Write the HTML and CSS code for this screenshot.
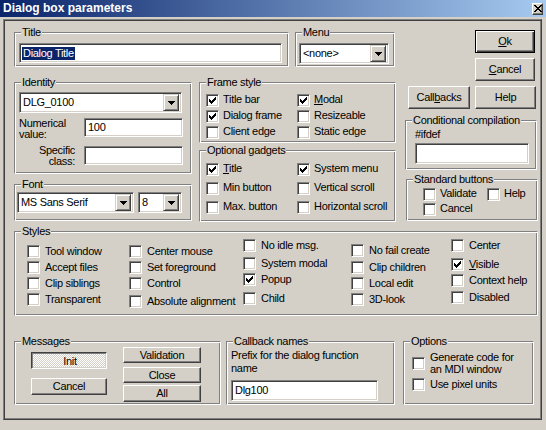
FILE: index.html
```html
<!DOCTYPE html>
<html>
<head>
<meta charset="utf-8">
<title>Dialog box parameters</title>
<link rel="stylesheet" href="styles.css">
</head>
<body>
<div class="window">
  <div class="titlebar">
    <span class="title-text">Dialog box parameters</span>
    <span class="close-btn"><svg width="8" height="7" viewBox="0 0 8 7"><path d="M0 0h2v1h-2zM6 0h2v1h-2zM1 1h2v1h-2zM5 1h2v1h-2zM2 2h4v1h-4zM3 3h2v1h-2zM2 4h4v1h-4zM1 5h2v1h-2zM5 5h2v1h-2zM0 6h2v1h-2zM6 6h2v1h-2z" fill="#000"/></svg></span>
  </div>
  <div class="client">
    <div class="top">
      <div class="left">
        <div class="row1">
          <div class="group g-title">
            <span class="legend">Title</span>
            <div class="edit title-edit"><span class="sel">Dialog Title</span></div>
          </div>
          <div class="group g-menu">
            <span class="legend">Menu</span>
            <div class="combo menu-combo"><span class="val">&lt;none&gt;</span><span class="drop"><svg width="7" height="4" viewBox="0 0 7 4"><path d="M0 0H7V1H6V2H5V3H4V4H3V3H2V2H1V1H0Z" fill="#000"/></svg></span></div>
          </div>
        </div>
        <div class="row2">
          <div class="colA">
            <div class="group g-identity">
              <span class="legend">Identity</span>
              <div class="combo id-combo"><span class="val">DLG_0100</span><span class="drop"><svg width="7" height="4" viewBox="0 0 7 4"><path d="M0 0H7V1H6V2H5V3H4V4H3V3H2V2H1V1H0Z" fill="#000"/></svg></span></div>
              <div class="id-fields">
                <div class="id-labels">
                  <div class="flabel"><span class="ln">Numerical</span><span class="ln">value:</span></div>
                  <div class="flabel ralign"><span class="ln">Specific</span><span class="ln">class:</span></div>
                </div>
                <div class="id-edits">
                  <div class="edit id-edit"><span class="val">100</span></div>
                  <div class="edit id-edit"></div>
                </div>
              </div>
            </div>
            <div class="group g-font">
              <span class="legend">Font</span>
              <div class="combo font-combo"><span class="val">MS Sans Serif</span><span class="drop"><svg width="7" height="4" viewBox="0 0 7 4"><path d="M0 0H7V1H6V2H5V3H4V4H3V3H2V2H1V1H0Z" fill="#000"/></svg></span></div>
              <div class="combo size-combo"><span class="val">8</span><span class="drop"><svg width="7" height="4" viewBox="0 0 7 4"><path d="M0 0H7V1H6V2H5V3H4V4H3V3H2V2H1V1H0Z" fill="#000"/></svg></span></div>
            </div>
          </div>
          <div class="colB">
            <div class="group g-frame">
              <span class="legend">Frame style</span>
              <div class="cbgrid frame-grid">
                <div class="cb"><span class="box checked"></span><span class="lbl">Title bar</span></div>
                <div class="cb"><span class="box checked"></span><span class="lbl"><u>M</u>odal</span></div>
                <div class="cb"><span class="box checked"></span><span class="lbl">Dialog frame</span></div>
                <div class="cb"><span class="box"></span><span class="lbl">Resizeable</span></div>
                <div class="cb"><span class="box"></span><span class="lbl">Client edge</span></div>
                <div class="cb"><span class="box"></span><span class="lbl">Static edge</span></div>
              </div>
            </div>
            <div class="group g-gadgets">
              <span class="legend">Optional gadgets</span>
              <div class="cbgrid gadget-grid">
                <div class="cb"><span class="box checked"></span><span class="lbl"><u>T</u>itle</span></div>
                <div class="cb"><span class="box checked"></span><span class="lbl">System menu</span></div>
                <div class="cb"><span class="box"></span><span class="lbl">Min button</span></div>
                <div class="cb"><span class="box"></span><span class="lbl">Vertical scroll</span></div>
                <div class="cb"><span class="box"></span><span class="lbl">Max. button</span></div>
                <div class="cb"><span class="box"></span><span class="lbl">Horizontal scroll</span></div>
              </div>
            </div>
          </div>
        </div>
      </div>
      <div class="right">
        <div class="btn default ok-btn"><span><u>O</u>k</span></div>
        <div class="btn ok-btn cancel-btn"><span><u>C</u>ancel</span></div>
        <div class="btn-row">
          <div class="btn cb-btn"><span>Call<u>b</u>acks</span></div>
          <div class="btn help-btn"><span>Help</span></div>
        </div>
        <div class="group g-cond">
          <span class="legend">Conditional compilation</span>
          <div class="cond-label">#ifdef</div>
          <div class="edit cond-edit"></div>
        </div>
        <div class="group g-std">
          <span class="legend">Standard buttons</span>
          <div class="std-row">
            <div class="cb std-first"><span class="box"></span><span class="lbl">Validate</span></div>
            <div class="cb"><span class="box"></span><span class="lbl">Help</span></div>
          </div>
          <div class="cb std-cancel"><span class="box"></span><span class="lbl">Cancel</span></div>
        </div>
      </div>
    </div>

    <div class="group g-styles">
      <span class="legend">Styles</span>
      <div class="style-cols">
        <div class="scol c1">
          <div class="cb"><span class="box"></span><span class="lbl">Tool window</span></div>
          <div class="cb"><span class="box"></span><span class="lbl">Accept files</span></div>
          <div class="cb"><span class="box"></span><span class="lbl">Clip siblings</span></div>
          <div class="cb"><span class="box"></span><span class="lbl">Transparent</span></div>
        </div>
        <div class="scol c2">
          <div class="cb"><span class="box"></span><span class="lbl">Center mouse</span></div>
          <div class="cb"><span class="box"></span><span class="lbl">Set foreground</span></div>
          <div class="cb"><span class="box"></span><span class="lbl">Control</span></div>
          <div class="cb"><span class="box"></span><span class="lbl">Absolute alignment</span></div>
        </div>
        <div class="scol c3">
          <div class="cb"><span class="box"></span><span class="lbl">No idle msg.</span></div>
          <div class="cb"><span class="box"></span><span class="lbl">System modal</span></div>
          <div class="cb"><span class="box checked"></span><span class="lbl">Popup</span></div>
          <div class="cb"><span class="box"></span><span class="lbl">Child</span></div>
        </div>
        <div class="scol c4">
          <div class="cb"><span class="box"></span><span class="lbl">No fail create</span></div>
          <div class="cb"><span class="box"></span><span class="lbl">Clip children</span></div>
          <div class="cb"><span class="box"></span><span class="lbl">Local edit</span></div>
          <div class="cb"><span class="box"></span><span class="lbl">3D-look</span></div>
        </div>
        <div class="scol c5">
          <div class="cb"><span class="box"></span><span class="lbl">Center</span></div>
          <div class="cb"><span class="box checked"></span><span class="lbl"><u>V</u>isible</span></div>
          <div class="cb"><span class="box"></span><span class="lbl">Context help</span></div>
          <div class="cb"><span class="box"></span><span class="lbl">Disabled</span></div>
        </div>
      </div>
    </div>

    <div class="bottom">
      <div class="group g-msg">
        <span class="legend">Messages</span>
        <div class="msg-cols">
          <div class="mcol ml">
            <div class="btn pressed init-btn"><span>Init</span></div>
            <div class="btn mcancel-btn"><span>Cancel</span></div>
          </div>
          <div class="mcol mr">
            <div class="btn val-btn"><span>Validation</span></div>
            <div class="btn close-msg-btn"><span>Close</span></div>
            <div class="btn all-btn"><span>All</span></div>
          </div>
        </div>
      </div>
      <div class="group g-cbnames">
        <span class="legend">Callback names</span>
        <div class="cbn-text">Prefix for the dialog function<br>name</div>
        <div class="edit cbn-edit"><span class="val">Dlg100</span></div>
      </div>
      <div class="group g-opts">
        <span class="legend">Options</span>
        <div class="cb opt-cb"><span class="box"></span><span class="lbl">Generate code for<br>an MDI window</span></div>
        <div class="cb opt-cb2"><span class="box"></span><span class="lbl">Use pixel units</span></div>
      </div>
    </div>
  </div>
</div>
</body>
</html>
```

FILE: styles.css
```css
* { box-sizing: border-box; }

body {
  margin: 0;
  background: #d4d0c8;
  font-family: "Liberation Sans", Arial, sans-serif;
  font-size: 11px;
  line-height: 13px;
  letter-spacing: -0.3px;
  color: #000;
}

u { text-decoration: underline; text-underline-offset: 1px; }

.window {
  width: 546px;
  height: 430px;
  background: #d4d0c8;
  overflow: hidden;
}

/* ---------- title bar ---------- */
.titlebar {
  height: 17px;
  background: linear-gradient(to right, #0a246a, #a6caf0);
  display: flex;
  align-items: center;
  justify-content: space-between;
  padding: 0 3px 0 3px;
}
.title-text {
  color: #fff;
  font-weight: bold;
  font-size: 12px;
  line-height: 17px;
  letter-spacing: 0;
}
.close-btn {
  width: 11px;
  height: 12px;
  background: #d4d0c8;
  border: 1px solid;
  border-color: #fff #404040 #404040 #fff;
  box-shadow: inset -1px -1px #808080;
  display: flex;
  align-items: center;
  justify-content: center;
}
.close-btn svg { display: block; }

/* ---------- client area ---------- */
.client {
  margin: 2px 4px 0 3px;
  height: 401px;
  border: 1px solid;
  border-color: #808080 #404040 #404040 #808080;
  box-shadow: inset 1px 1px #404040, inset -1px -1px #808080;
  padding: 1px;
}

/* ---------- group box ---------- */
.group {
  position: relative;
  border: 1px solid;
  border-color: #808080 #fff #fff #808080;
  box-shadow: inset 1px 1px #fff, inset -1px -1px #808080;
}
.legend {
  position: absolute;
  top: -7px;
  left: 6px;
  padding: 0 1px;
  background: #d4d0c8;
  white-space: nowrap;
}

/* ---------- controls ---------- */
.edit, .combo {
  background: #fff;
  border: 1px solid;
  border-color: #808080 #fff #fff #808080;
  box-shadow: inset 1px 1px #404040, inset -1px -1px #d4d0c8;
  padding: 2px;
  display: flex;
  align-items: center;
  white-space: nowrap;
  overflow: hidden;
}
.val { padding-left: 1px; }
.combo { justify-content: space-between; padding-right: 2px; }
.drop {
  width: 16px;
  height: 17px;
  flex: none;
  background: #d4d0c8;
  border: 1px solid;
  border-color: #d4d0c8 #404040 #404040 #d4d0c8;
  box-shadow: inset 1px 1px #fff, inset -1px -1px #808080;
  display: flex;
  align-items: center;
  justify-content: center;
}
.drop svg { display: block; }

.btn {
  background: #d4d0c8;
  border: 1px solid;
  border-color: #fff #404040 #404040 #fff;
  box-shadow: inset -1px -1px #808080, inset 1px 1px #d4d0c8;
  display: flex;
  align-items: center;
  justify-content: center;
  white-space: nowrap;
}
.btn.default {
  border: 1px solid #000;
  box-shadow: inset 1px 1px #fff, inset -1px -1px #404040, inset -2px -2px #808080;
}
.btn.pressed {
  border-color: #404040 #fff #fff #404040;
  box-shadow: inset 1px 1px #808080, inset -1px -1px #d4d0c8;
  background: repeating-conic-gradient(#fff 0 25%, #d4d0c8 0 50%) 0 0 / 2px 2px;
}
.btn.pressed span { position: relative; top: 1px; left: 1px; }

/* checkbox */
.cb {
  display: flex;
  align-items: flex-start;
}
.box {
  width: 13px;
  height: 13px;
  flex: none;
  background: #fff;
  border: 1px solid;
  border-color: #808080 #fff #fff #808080;
  box-shadow: inset 1px 1px #404040, inset -1px -1px #d4d0c8;
}
.box.checked {
  background: #fff url("data:image/svg+xml;utf8,<svg xmlns='http://www.w3.org/2000/svg' width='11' height='11' viewBox='1 1 11 11'><path d='M3 5H4V6H5V7H6V6H7V5H8V4H9V3H10V6H9V7H8V8H7V9H6V10H5V9H4V8H3Z' fill='black'/></svg>") no-repeat 0 0;
}
.lbl {
  margin-left: 4px;
  margin-top: -1px;
  white-space: nowrap;
}

/* ---------- layout: top section ---------- */
.top { display: flex; }
.left { width: 391px; padding-left: 9px; padding-top: 11px; }
.right { width: 133px; margin-left: 9px; padding-top: 9px; }

.row1 { display: flex; gap: 6px; }
.g-title { width: 275px; height: 35px; padding: 10px 0 0 4px; }
.title-edit { width: 263px; height: 20px; padding-left: 2px; }
.sel { background: #0a246a; color: #fff; padding: 0 1px; line-height: 13px; }
.g-menu { width: 100px; height: 35px; padding: 10px 0 0 3px; }
.menu-combo { width: 90px; height: 21px; }

.row2 { display: flex; margin-top: 15px; }
.colA { width: 178px; }
.g-identity { height: 92px; padding: 9px 0 0 4px; }
.id-combo { width: 163px; height: 21px; }
.id-fields { display: flex; margin-top: 5px; }
.id-labels { width: 56px; margin-right: 9px; flex: none; }
.flabel { height: 22px; }
.flabel .ln { display: block; height: 11px; line-height: 11px; white-space: nowrap; }
.flabel.ralign { margin-top: 5px; text-align: right; }
.id-edits { display: flex; flex-direction: column; gap: 9px; }
.id-edit { width: 99px; height: 19px; }

.g-font { margin-top: 10px; height: 37px; padding: 7px 0 0 2px; display: flex; gap: 4px; }
.font-combo { width: 117px; height: 21px; }
.size-combo { width: 44px; height: 21px; }

.colB { width: 197px; margin-left: 7px; }
.cbgrid { display: grid; grid-template-columns: 91px 1fr; }
.g-frame { height: 61px; padding: 11px 0 0 6px; }
.frame-grid { row-gap: 3px; }
.g-gadgets { margin-top: 7px; height: 72px; padding: 12px 0 0 6px; }
.gadget-grid { grid-template-rows: 13px 13px 13px; row-gap: 6px; }

.ok-btn { width: 60px; height: 23px; margin-left: 70px; }
.cancel-btn { margin-top: 5px; }
.btn-row { display: flex; gap: 5px; margin: 5px 0 0 3px; }
.cb-btn { width: 62px; height: 23px; }
.help-btn { width: 61px; height: 23px; }
.g-cond { margin-top: 11px; width: 132px; height: 50px; padding: 7px 0 0 9px; }
.cond-label { height: 15px; }
.cond-edit { width: 114px; height: 21px; }
.g-std { margin: 9px 0 0 1px; width: 132px; height: 42px; padding: 8px 0 0 16px; }
.std-row { display: flex; }
.std-first { width: 64px; }
.std-cancel { margin-top: 2px; }

/* ---------- styles ---------- */
.g-styles { margin: 9px 0 0 9px; width: 524px; height: 85px; padding: 7px 0 0 12px; }
.style-cols { display: flex; }
.scol { display: flex; flex-direction: column; }
.scol .lbl { margin-left: 5px; margin-top: 0; }
.c1 { width: 102px; padding-top: 6px; }
.c2 { width: 114px; padding-top: 6px; }
.c3 { width: 108px; padding-top: 0; }
.c4 { width: 100px; padding-top: 5px; }
.c5 { padding-top: 0; }
.c1 .cb + .cb, .c2 .cb + .cb { margin-top: 3px; }
.c2 .cb:nth-child(4) { margin-top: 5px; }
.c3 .cb:nth-child(2) { margin-top: 5px; }
.c3 .cb:nth-child(3) { margin-top: 3px; }
.c3 .cb:nth-child(4) { margin-top: 6px; }
.c4 .cb:nth-child(2) { margin-top: 4px; }
.c4 .cb:nth-child(3), .c4 .cb:nth-child(4) { margin-top: 3px; }
.c5 .cb:nth-child(2) { margin-top: 6px; }
.c5 .cb:nth-child(3) { margin-top: 3px; }
.c5 .cb:nth-child(4) { margin-top: 4px; }

/* ---------- bottom ---------- */
.bottom { display: flex; margin: 25px 0 0 9px; }
.g-msg { width: 207px; height: 64px; padding: 0 0 0 16px; }
.msg-cols { display: flex; gap: 16px; }
.mcol { display: flex; flex-direction: column; }
.ml { padding-top: 10px; }
.mr { padding-top: 5px; }
.init-btn, .mcancel-btn { width: 76px; height: 17px; }
.mcancel-btn { margin-top: 9px; }
.val-btn, .close-msg-btn, .all-btn { width: 78px; height: 16px; }
.close-msg-btn { margin-top: 4px; }
.all-btn { margin-top: 2px; height: 17px; }

.g-cbnames { margin-left: 5px; width: 169px; height: 64px; padding: 7px 0 0 4px; }
.cbn-edit { margin-top: 5px; width: 147px; height: 21px; }

.g-opts { margin-left: 8px; width: 131px; height: 64px; padding: 9px 0 0 8px; }
.opt-cb { align-items: center; }
.opt-cb .lbl { margin-top: 0; line-height: 12px; margin-left: 5px; }
.opt-cb2 { margin-top: 3px; }
.opt-cb2 .lbl { margin-left: 5px; margin-top: 0; }
```
